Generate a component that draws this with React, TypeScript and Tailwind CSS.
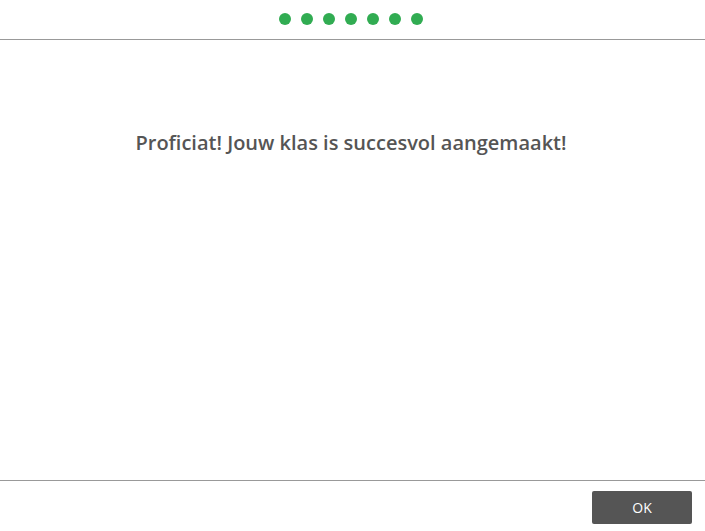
export default function App() {
  return (
    <div className="w-[705px] h-[531px] bg-white flex flex-col font-['Open_Sans',sans-serif]">
      <div className="h-[40px] flex items-start justify-center gap-[10px] pt-[13px] pr-[3px] border-b border-[#999999]">
        {[0, 1, 2, 3, 4, 5, 6].map((i) => (
          <span key={i} className="w-[12px] h-[12px] rounded-full bg-[#31ac52]" />
        ))}
      </div>
      <div className="flex-1 flex justify-center pt-[89px] pr-[3px]">
        <h1 className="text-[20px] leading-[28px] font-semibold text-[#555555] h-[28px]">
          Proficiat! Jouw klas is succesvol aangemaakt!
        </h1>
      </div>
      <div className="h-[51px] border-t border-[#999999] flex items-start justify-end pt-[10px] pr-[13px]">
        <button className="w-[100px] h-[33px] bg-[#555555] text-white text-[14px] rounded-[2px]">
          OK
        </button>
      </div>
    </div>
  );
}
